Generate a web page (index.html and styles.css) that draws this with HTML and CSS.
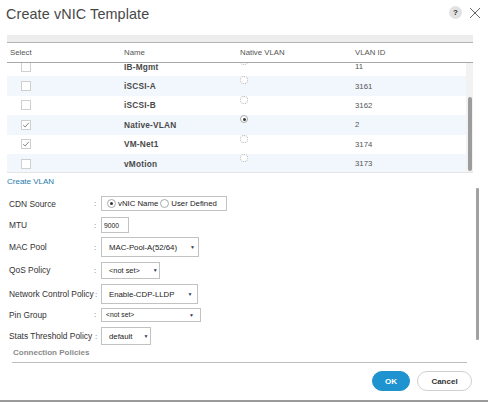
FILE: index.html
```html
<!DOCTYPE html>
<html>
<head>
<meta charset="utf-8">
<link rel="stylesheet" href="styles.css">
</head>
<body>
<div class="dialog">
  <header class="titlebar">
    <h1 class="title">Create vNIC Template</h1>
    <div class="tools">
      <span class="help">?</span>
      <svg class="close" width="12" height="12" viewBox="0 0 12 12"><path d="M1 1L11 11M11 1L1 11" stroke="#666" stroke-width="1"/></svg>
    </div>
  </header>

  <div class="table">
    <div class="strip"></div>
    <div class="thead">
      <span class="th th-select">Select</span>
      <span class="th">Name</span>
      <span class="th">Native VLAN</span>
      <span class="th">VLAN ID</span>
    </div>
    <div class="tbody">
      <div class="rows">
        <div class="row first">
          <span class="c-sel"><span class="cb"></span></span>
          <span class="c-name">IB-Mgmt</span>
          <span class="c-nat"><span class="rd"></span></span>
          <span class="c-id">11</span>
        </div>
        <div class="row alt">
          <span class="c-sel"><span class="cb"></span></span>
          <span class="c-name">iSCSI-A</span>
          <span class="c-nat"><span class="rd"></span></span>
          <span class="c-id">3161</span>
        </div>
        <div class="row">
          <span class="c-sel"><span class="cb"></span></span>
          <span class="c-name">iSCSI-B</span>
          <span class="c-nat"><span class="rd"></span></span>
          <span class="c-id">3162</span>
        </div>
        <div class="row alt">
          <span class="c-sel"><span class="cb"><svg width="8" height="8" viewBox="0 0 8 8"><path d="M1.2 4.2L3.2 6L6.8 1.8" fill="none" stroke="#777" stroke-width="0.9"/></svg></span></span>
          <span class="c-name">Native-VLAN</span>
          <span class="c-nat"><span class="rd on"></span></span>
          <span class="c-id">2</span>
        </div>
        <div class="row">
          <span class="c-sel"><span class="cb"><svg width="8" height="8" viewBox="0 0 8 8"><path d="M1.2 4.2L3.2 6L6.8 1.8" fill="none" stroke="#777" stroke-width="0.9"/></svg></span></span>
          <span class="c-name">VM-Net1</span>
          <span class="c-nat"><span class="rd"></span></span>
          <span class="c-id">3174</span>
        </div>
        <div class="row alt">
          <span class="c-sel"><span class="cb"></span></span>
          <span class="c-name">vMotion</span>
          <span class="c-nat"><span class="rd"></span></span>
          <span class="c-id">3173</span>
        </div>
      </div>
      <div class="vscroll"><div class="thumb"></div></div>
    </div>
  </div>

  <a class="create-link">Create VLAN</a>

  <div class="form">
    <div class="frow r1">
      <span class="lbl">CDN Source</span><span class="colon">:</span>
      <span class="cdn">
        <span class="radio on"></span><span class="opt">vNIC Name</span>
        <span class="radio"></span><span class="opt">User Defined</span>
      </span>
    </div>
    <div class="frow r2">
      <span class="lbl">MTU</span><span class="colon">:</span>
      <span class="input mtu">9000</span>
    </div>
    <div class="frow r3">
      <span class="lbl">MAC Pool</span><span class="colon">:</span>
      <span class="select mac">MAC-Pool-A(52/64)<span class="arrow">▼</span></span>
    </div>
    <div class="frow r4">
      <span class="lbl">QoS Policy</span><span class="colon">:</span>
      <span class="select qos">&lt;not set&gt;<span class="arrow">▼</span></span>
    </div>
    <div class="frow r5">
      <span class="lbl">Network Control Policy</span><span class="colon tight">:</span>
      <span class="select ncp">Enable-CDP-LLDP<span class="arrow">▼</span></span>
    </div>
    <div class="frow r6">
      <span class="lbl">Pin Group</span><span class="colon">:</span>
      <span class="select pin">&lt;not set&gt;<span class="arrow">▼</span></span>
    </div>
    <div class="frow r7">
      <span class="lbl">Stats Threshold Policy</span><span class="colon tight">:</span>
      <span class="select stats">default<span class="arrow">▼</span></span>
    </div>
  </div>

  <div class="section">Connection Policies</div>
  <div class="rule"></div>

  <footer class="footer">
    <button class="btn ok">OK</button>
    <button class="btn cancel">Cancel</button>
  </footer>
  <div class="bottom-line"></div>

  <div class="page-scroll"></div>
</div>
</body>
</html>
```

FILE: styles.css
```css
* { box-sizing: border-box; }
html, body { margin: 0; padding: 0; background: #fff; }
body { width: 488px; height: 403px; overflow: hidden; font-family: "Liberation Sans", Arial, sans-serif; color: #333; }

.dialog { position: relative; width: 488px; height: 403px; }

.titlebar { height: 35px; display: flex; justify-content: space-between; align-items: flex-start; padding: 0 7px 0 6px; }
.title { margin: 0; font-size: 14.4px; font-weight: normal; line-height: 28px; color: #474747; letter-spacing: 0.1px; }
.tools { display: flex; align-items: center; gap: 7px; padding-top: 6px; }
.help { width: 13px; height: 13px; border-radius: 50%; background: #e2e2e2; color: #333; font-size: 8px; font-weight: bold; display: flex; align-items: center; justify-content: center; line-height: 1; }
.close { display: block; }

.table { margin-left: 7px; width: 466px; }
.strip { height: 8px; background: #ededed; border-bottom: 1px solid #b4b4b4; }
.thead { height: 20px; display: grid; grid-template-columns: 117px 116px 115px 1fr; align-items: center; border-bottom: 1px solid #a8a8a8; }
.th { font-size: 7.8px; color: #555; }
.th-select { padding-left: 3px; }

.tbody { height: 110px; display: flex; border-bottom: 1px solid #e4e4e4; overflow: hidden; }
.rows { flex: 1; overflow: hidden; }
.row { height: 19.4px; display: grid; grid-template-columns: 117px 116px 115px 1fr; align-items: center; }
.row.first { margin-top: -6px; }
.row.alt { background: #f1f7fc; }
.c-sel { padding-left: 14px; display: flex; align-items: center; }
.cb { width: 10px; height: 10px; border: 1px solid #cfcfcf; background: #fff; display: flex; align-items: center; justify-content: center; }
.cb svg { display: block; }
.c-name { font-size: 8.3px; font-weight: bold; color: #4a4a4a; letter-spacing: 0.2px; }
.c-nat { align-self: start; padding-top: 0; display: flex; }
.rd { width: 8px; height: 8px; border-radius: 50%; border: 1px dotted #b0b0b0; background: #fff; display: flex; align-items: center; justify-content: center; }
.rd.on { border: 1px solid #aaa; }
.rd.on::after { content: ""; width: 3px; height: 3px; border-radius: 50%; background: #333; }
.c-id { font-size: 7.8px; color: #555; }

.vscroll { width: 7px; background: #f2f2f2; display: flex; justify-content: center; }
.thumb { width: 4px; height: 74px; margin-top: 34px; background: #9c9c9c; border-radius: 2px; }

.create-link { display: block; margin: 3px 0 0 7px; font-size: 8px; line-height: 12px; color: #1f7bab; }

.form { margin-top: 5px; padding-left: 9px; }
.frow { display: flex; align-items: center; }
.r1 { height: 21px; }
.r2 { height: 22px; }
.r3 { height: 22px; }
.r4 { height: 24px; }
.r5 { height: 24px; }
.r6 { height: 17px; }
.r7 { height: 26px; }
.lbl { width: 85px; font-size: 8.4px; color: #333; white-space: nowrap; }
.colon { width: 7px; font-size: 8px; color: #666; }
.colon.tight { margin-left: 1px; width: 6px; }

.cdn, .input, .select { border: 1px solid #c2c2c2; background: #fff; display: flex; align-items: center; font-size: 7.8px; color: #222; }
.cdn { width: 126px; height: 15px; padding-left: 5px; }
.radio { width: 9px; height: 9px; border-radius: 50%; border: 1px solid #aaa; display: flex; align-items: center; justify-content: center; margin-right: 2px; }
.radio.on::after { content: ""; width: 3px; height: 3px; border-radius: 50%; background: #333; }
.opt { margin-right: 2px; }
.input.mtu { width: 28px; height: 16px; padding-left: 2px; font-size: 6.8px; }
.select { padding-left: 7px; position: relative; }
.arrow { font-size: 5px; color: #2e3d5c; }
.mac { width: 98px; height: 20px; }
.mac .arrow, .ncp .arrow { margin-left: 13px; }
.qos { width: 59px; height: 17px; font-size: 7.4px; }
.qos .arrow { margin-left: 13px; }
.ncp { width: 97px; height: 20px; }
.pin { width: 100px; height: 14px; padding-left: 4px; font-size: 6.8px; justify-content: space-between; padding-right: 6px; }
.stats { width: 50px; height: 18px; }
.stats .arrow { margin-left: 11px; }

.section { margin: -1px 0 0 13px; font-size: 8px; line-height: 10px; font-weight: bold; color: #8a8a8a; }
.rule { margin: 4px 0 0 12px; width: 455px; height: 1px; background: #bdbdbd; }

.footer { display: flex; justify-content: flex-end; gap: 7px; padding-right: 16px; margin-top: 8px; }
.btn { height: 20px; border-radius: 10px; font-family: "Liberation Sans", Arial, sans-serif; font-size: 8px; font-weight: bold; padding: 0; cursor: pointer; }
.ok { width: 38px; background: #1e93cf; border: 1px solid #1e93cf; color: #fff; }
.cancel { width: 55px; background: #fff; border: 1px solid #cfcfcf; color: #333; }

.bottom-line { margin-top: 9px; height: 2px; background: #9a9a9a; }

.page-scroll { position: absolute; left: 476px; top: 188px; width: 3px; height: 152px; background: #a2a2a2; border-radius: 1px; }
```
